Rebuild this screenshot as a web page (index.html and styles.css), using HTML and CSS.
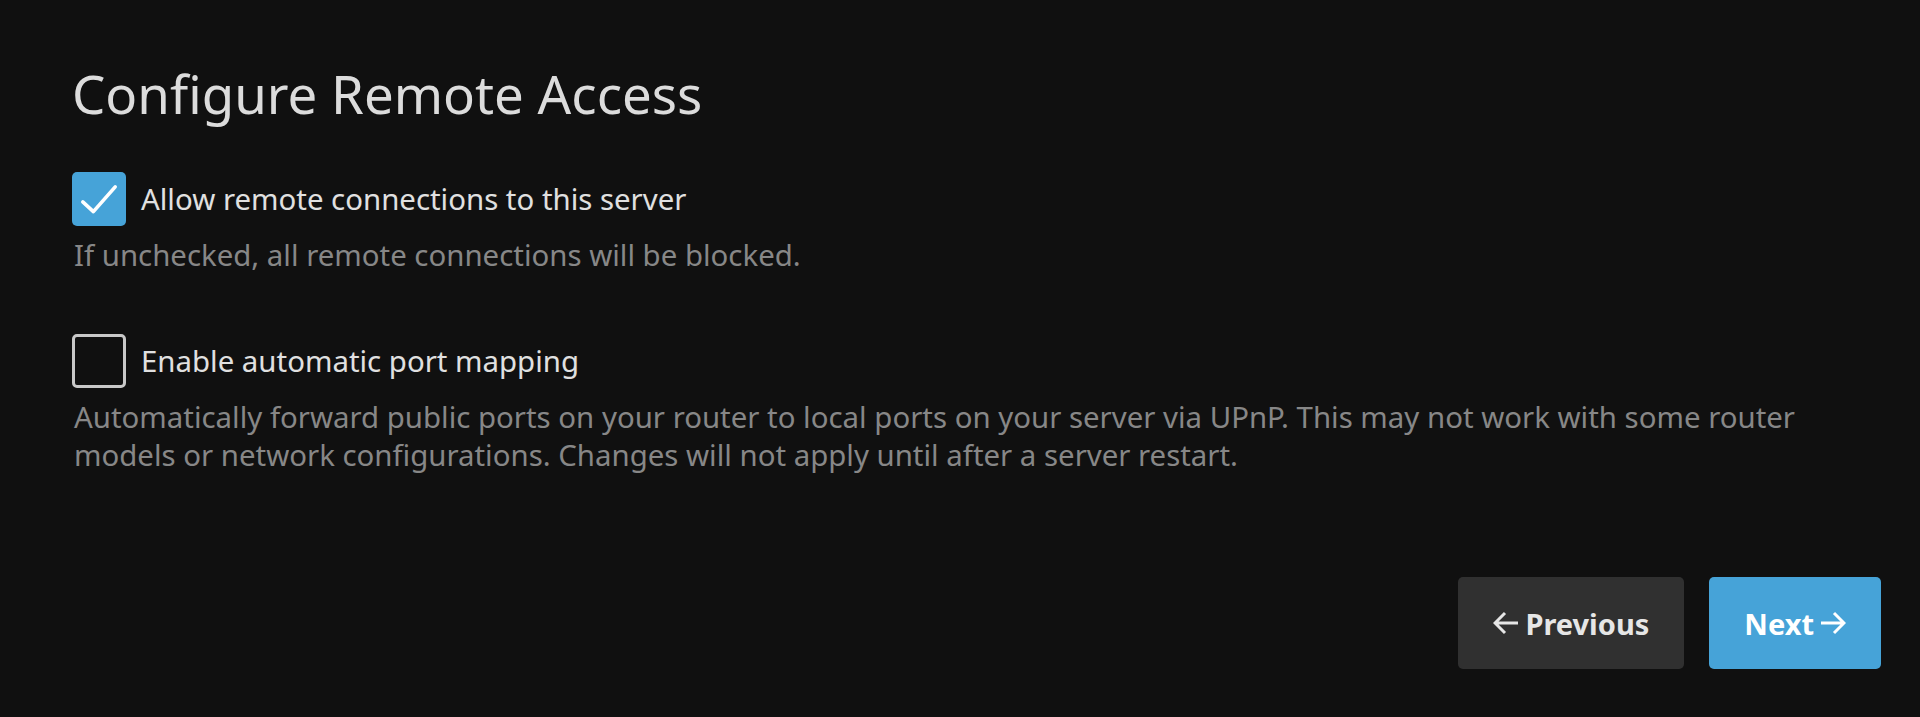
FILE: index.html
```html
<!DOCTYPE html>
<html lang="en">
<head>
  <meta charset="UTF-8">
  <meta name="viewport" content="width=device-width, initial-scale=1.0">
  <title>Configure Remote Access</title>
  <link rel="stylesheet" href="styles.css">
</head>
<body>

<div class="wizard">
  <h1>Configure Remote Access</h1>

  <div class="field">
    <label class="check-row">
      <span class="box checked">
        <svg viewBox="0 0 24 24" width="54" height="54"><polyline points="4.8,13.3 9.5,17.6 19.2,6.6" fill="none" stroke="#fff" stroke-width="1.6" stroke-linecap="round" stroke-linejoin="round"/></svg>
      </span>
      <span class="label-text">Allow remote connections to this server</span>
    </label>
    <div class="description">If unchecked, all remote connections will be blocked.</div>
  </div>

  <div class="field">
    <label class="check-row">
      <span class="box"></span>
      <span class="label-text">Enable automatic port mapping</span>
    </label>
    <div class="description">Automatically forward public ports on your router to local ports on your server via UPnP. This may not work with some router models or network configurations. Changes will not apply until after a server restart.</div>
  </div>

  <div class="buttons">
    <button class="btn btn-prev" type="button">
      <svg viewBox="0 0 26 24" width="26" height="24"><path d="M25 12H2M12 2L2 12l10 10" fill="none" stroke="currentColor" stroke-width="3"/></svg>
      <span>Previous</span>
    </button>
    <button class="btn btn-next" type="button">
      <span>Next</span>
      <svg viewBox="0 0 26 24" width="26" height="24"><path d="M1 12h23M14 2l10 10-10 10" fill="none" stroke="currentColor" stroke-width="3"/></svg>
    </button>
  </div>
</div>

</body>
</html>
```

FILE: styles.css
```css
html, body {
  margin: 0;
  padding: 0;
  background: #101010;
}
body {
  font-family: "Noto Sans", sans-serif;
  color: #e0e0e0;
}
.wizard {
  padding: 63px 39px 0 72px;
}
h1 {
  margin: 0;
  font-size: 52.8px;
  line-height: 62px;
  font-weight: 400;
  color: #dcdcdc;
}
.field {
  margin-top: 47px;
}
.field + .field {
  margin-top: 60px;
}
.check-row {
  display: flex;
  align-items: center;
  gap: 15px;
  height: 54px;
  cursor: pointer;
}
.box {
  box-sizing: border-box;
  width: 54px;
  height: 54px;
  border: 3px solid #c8c8c8;
  border-radius: 5px;
  flex-shrink: 0;
}
.box.checked {
  border: none;
  background: #46a3d8;
}
.box svg {
  display: block;
}
.label-text {
  font-size: 29.4px;
  color: #e0e0e0;
}
.description {
  max-width: 1760px;
  margin: 10px 0 0 2px;
  font-size: 29.4px;
  line-height: 38px;
  color: #878787;
}
.buttons {
  display: flex;
  justify-content: flex-end;
  gap: 25px;
  margin-top: 103px;
}
.btn {
  display: flex;
  align-items: center;
  gap: 6px;
  height: 92px;
  padding: 0 35px;
  border: none;
  border-radius: 5px;
  font-family: "Noto Sans", sans-serif;
  font-size: 29px;
  font-weight: 700;
  color: #fff;
  cursor: pointer;
}
.btn-prev {
  background: #303030;
  color: #e6e6e6;
}
.btn-next {
  background: #46a3d8;
}
```
